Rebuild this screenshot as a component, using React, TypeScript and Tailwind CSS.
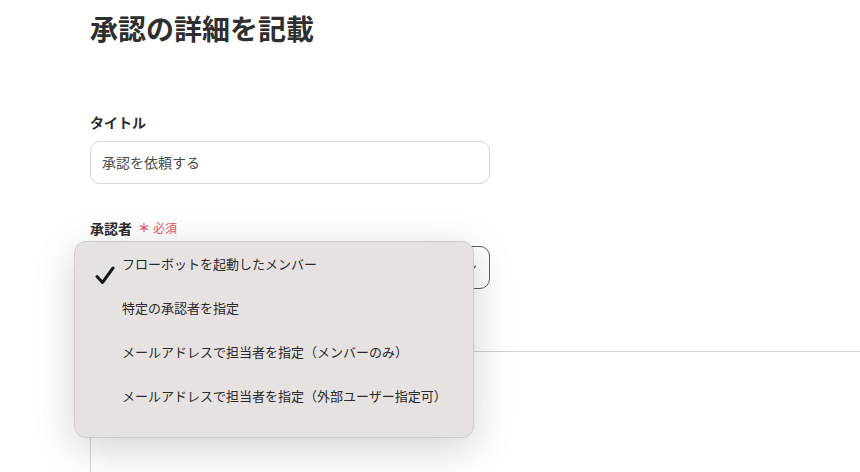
import { ChevronDown } from "lucide-react";

const options = [
  "フローボットを起動したメンバー",
  "特定の承認者を指定",
  "メールアドレスで担当者を指定（メンバーのみ）",
  "メールアドレスで担当者を指定（外部ユーザー指定可）",
];

export default function App() {
  return (
    <div
      className="relative h-[472px] w-[860px] overflow-hidden bg-white text-[#2b2b2b]"
      style={{ fontFamily: '"Noto Sans CJK JP", "Noto Sans", sans-serif' }}
    >
      <div className="pl-[90px]">
        <h1 className="pt-[9px] text-[28px] font-bold leading-[38px] text-[#2f2f2f]">
          承認の詳細を記載
        </h1>

        <div className="mt-[65px] w-[400px]">
          <label className="block text-[14px] font-bold leading-[20px]">タイトル</label>
          <div className="mt-[9px] flex h-[43px] items-center rounded-[10px] border border-[#d3d6dc] px-[11px] text-[14px] text-[#4a4a4a]">
            承認を依頼する
          </div>
        </div>

        <div className="mt-[34px] w-[400px]">
          <label className="flex items-center gap-[6px] text-[14px] font-bold leading-[20px]">
            承認者
            <span className="flex items-center gap-[3px] text-[12px] font-normal text-[#e0555f]">
              <span className="text-[12px] font-bold">＊</span>必須
            </span>
          </label>
          <div className="mt-[8px] flex h-[43px] items-center justify-end rounded-[10px] border border-[#5a5a5a] px-[10px]">
            <ChevronDown className="h-[14px] w-[14px] text-[#555]" strokeWidth={2} />
          </div>
        </div>

        <div className="mt-[62px] h-[200px] border-l border-t border-[#cdd1d8]" />
      </div>

      <div className="absolute left-[74px] top-[241px] h-[197px] w-[400px] rounded-[12px] border border-[#cfcbca] bg-[#e6e2e1] shadow-[0_10px_40px_rgba(0,0,0,0.18)]">
        <ul className="pt-[12px]">
          {options.map((opt, i) => (
            <li key={i} className="relative flex h-[44px] items-start pl-[47px] text-[13px] leading-[20px] text-[#2a2a2a]">
              {i === 0 && (
                <svg
                  className="absolute left-[20px] top-[12px]"
                  width="20"
                  height="19"
                  viewBox="0 0 20 19"
                  fill="none"
                >
                  <path d="M2 10.5 L7.5 16.5 L18 2" stroke="#1a1a1a" strokeWidth="3" strokeLinecap="round" strokeLinejoin="round" />
                </svg>
              )}
              {opt}
            </li>
          ))}
        </ul>
      </div>
    </div>
  );
}
